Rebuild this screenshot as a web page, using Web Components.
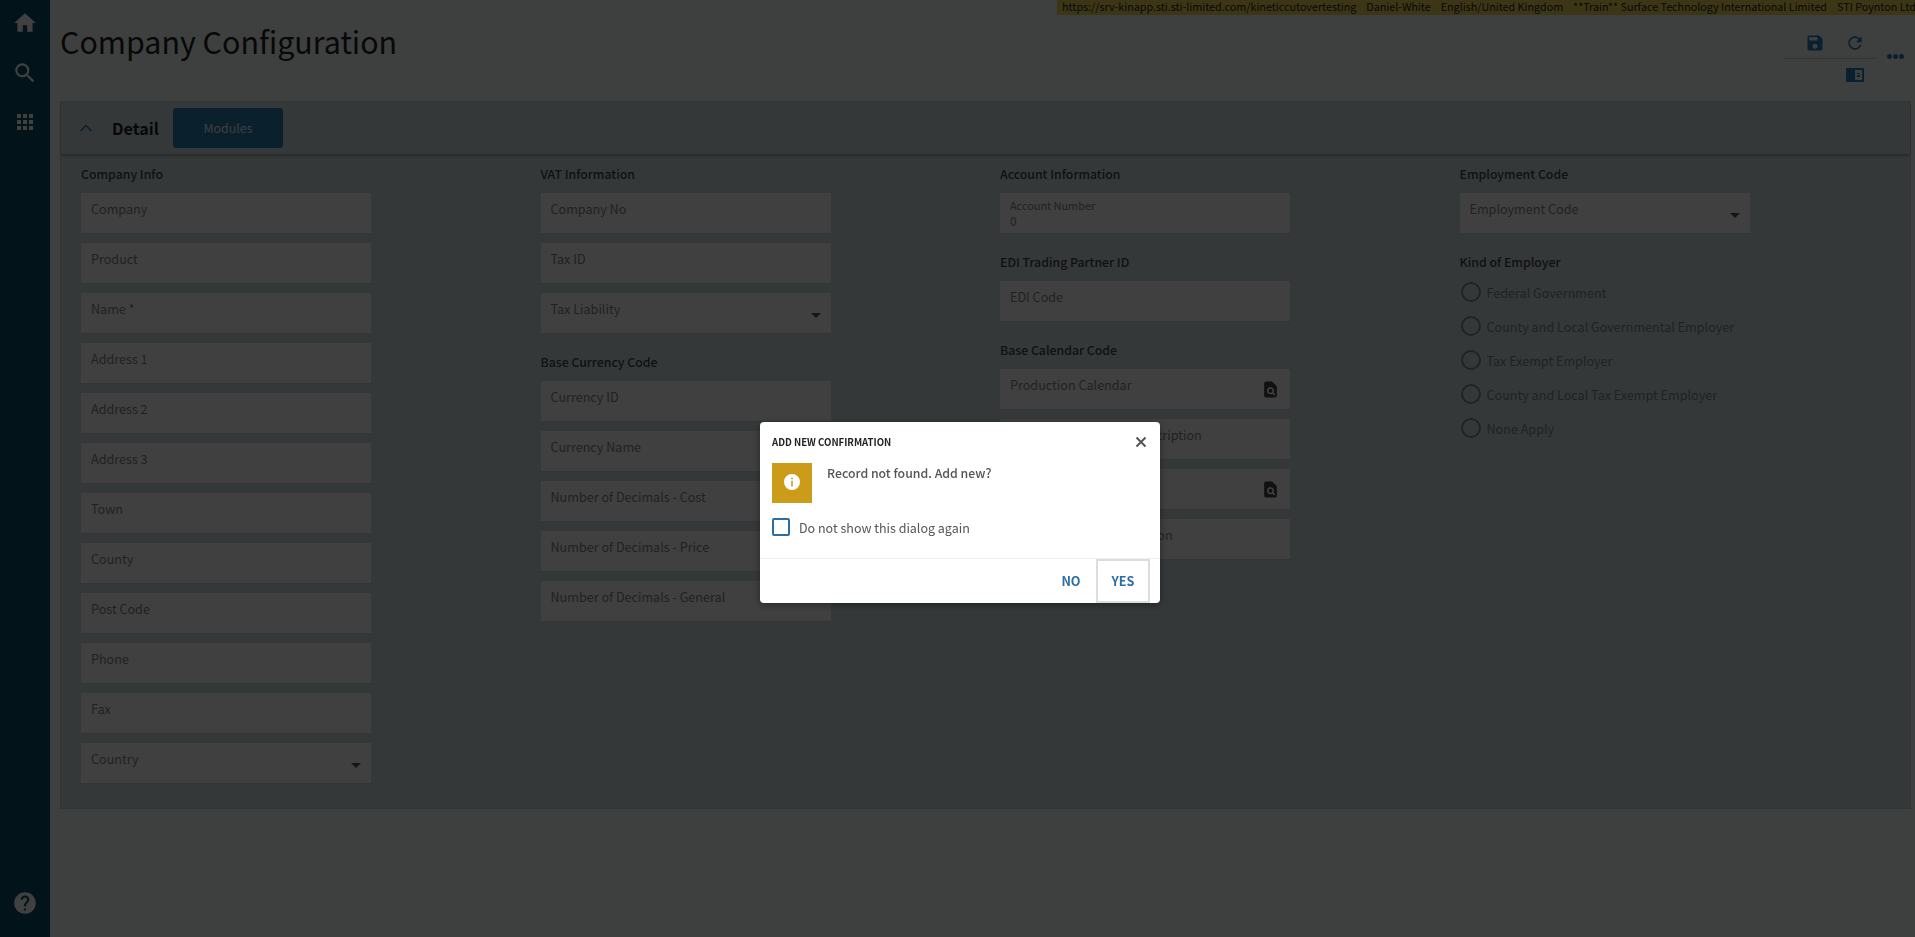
<!DOCTYPE html>
<html lang="en">
<head>
<meta charset="utf-8">
<title>Company Configuration</title>
<style>
  html, body { margin: 0; height: 100%; }
  body {
    font-family: "Noto Sans CJK SC", "Source Sans Pro", "Open Sans", sans-serif;
    background: #f8fcfc;
    overflow: hidden;
  }
</style>
</head>
<body>
<company-page></company-page>

<script>
const ICONS = {
  home: "M10 20v-6h4v6h5v-8h3L12 3 2 12h3v8z",
  search: "M15.5 14h-.79l-.28-.27A6.47 6.47 0 0 0 16 9.5 6.5 6.5 0 1 0 9.5 16c1.61 0 3.09-.59 4.23-1.57l.27.28v.79l5 4.99L20.49 19l-4.99-5zm-6 0C7.01 14 5 11.99 5 9.5S7.01 5 9.5 5 14 7.01 14 9.5 11.99 14 9.5 14z",
  help: "M12 2C6.48 2 2 6.48 2 12s4.48 10 10 10 10-4.48 10-10S17.52 2 12 2zm1 17h-2v-2h2v2zm2.07-7.75l-.9.92C13.45 12.9 13 13.5 13 15h-2v-.5c0-1.1.45-2.1 1.17-2.83l1.24-1.26c.37-.36.59-.86.59-1.41 0-1.1-.9-2-2-2s-2 .9-2 2H8c0-2.21 1.79-4 4-4s4 1.79 4 4c0 .88-.36 1.68-.93 2.25z",
  save: "M17 3H5c-1.11 0-2 .9-2 2v14c0 1.1.89 2 2 2h14c1.1 0 2-.9 2-2V7l-4-4zm-5 16c-1.66 0-3-1.34-3-3s1.34-3 3-3 3 1.34 3 3-1.34 3-3 3zm3-10H5V5h10v4z",
  refresh: "M17.65 6.35A7.958 7.958 0 0 0 12 4c-4.42 0-7.99 3.58-7.99 8s3.57 8 7.99 8c3.73 0 6.84-2.55 7.73-6h-2.08A5.99 5.99 0 0 1 12 18c-3.31 0-6-2.69-6-6s2.69-6 6-6c1.66 0 3.14.69 4.22 1.78L13 11h7V4l-2.35 2.35z",
  grid: "M4 4h4v4H4zM10 4h4v4h-4zM16 4h4v4h-4zM4 10h4v4H4zM10 10h4v4h-4zM16 10h4v4h-4zM4 16h4v4H4zM10 16h4v4h-4zM16 16h4v4h-4z",
  lookup: "M6 2h8l6 6v12a2 2 0 0 1-2 2H6a2 2 0 0 1-2-2V4a2 2 0 0 1 2-2zm6 7a4.5 4.5 0 1 0 2.4 8.3l2.3 2.3 1.4-1.4-2.3-2.3A4.5 4.5 0 0 0 12 9zm0 2a2.5 2.5 0 1 1 0 5 2.5 2.5 0 0 1 0-5z",
};

function icon(name, size) {
  return `<svg width="${size}" height="${size}" viewBox="0 0 24 24" fill="currentColor" aria-hidden="true"><path fill-rule="evenodd" d="${ICONS[name]}"/></svg>`;
}

class SideBar extends HTMLElement {
  constructor() {
    super();
    this.attachShadow({ mode: "open" });
    this.shadowRoot.innerHTML = `
      <style>
        :host {
          display: flex;
          flex-direction: column;
          align-items: center;
          width: 50px;
          flex: none;
          background: #0c4c68;
          color: #fff;
          padding: 7px 0 16px;
          box-sizing: border-box;
        }
        .item { height: 50px; display: flex; align-items: flex-start; padding-top: 3px; box-sizing: border-box; }
        .help { margin-top: auto; }
      </style>
      <div class="item">${icon("home", 26)}</div>
      <div class="item">${icon("search", 26)}</div>
      <div class="item">${icon("grid", 24)}</div>
      <div class="help">${icon("help", 26)}</div>
    `;
  }
}

class InfoBar extends HTMLElement {
  constructor() {
    super();
    this.attachShadow({ mode: "open" });
    this.shadowRoot.innerHTML = `
      <style>
        :host {
          display: flex;
          justify-content: flex-end;
        }
        .bar {
          width: 858px;
          height: 15px;
          box-sizing: border-box;
          padding-left: 5px;
          display: flex;
          gap: 10px;
          background: #f0d858;
          color: #222;
          font-size: 10.75px;
          line-height: 13px;
          white-space: nowrap;
          overflow: hidden;
        }
      </style>
      <div class="bar"><slot></slot></div>
    `;
  }
}

class PageHeader extends HTMLElement {
  constructor() {
    super();
    this.attachShadow({ mode: "open" });
    this.shadowRoot.innerHTML = `
      <style>
        :host {
          display: flex;
          justify-content: space-between;
          height: 86px;
          padding-left: 10px;
        }
        h1 {
          margin: 4px 0 0;
          font-size: 30.4px;
          font-weight: 400;
          line-height: 44px;
          color: #222;
        }
        .tools { display: flex; align-items: flex-start; padding-top: 13px; color: #2f7fb8; }
        .actions { width: 92px; }
        .row { display: flex; justify-content: flex-end; height: 30px; align-items: center; }
        .row.first { border-bottom: 1px solid #ccc; }
        .row.second { height: 32px; }
        .btn { width: 40px; display: flex; justify-content: center; }
        .more { width: 40px; height: 30px; margin-top: 13px; display: flex; justify-content: center; gap: 1px; align-items: center; }
        .more i { width: 5px; height: 5px; border-radius: 50%; background: currentColor; }
      </style>
      <h1><slot></slot></h1>
      <div class="tools">
        <div class="actions">
          <div class="row first">
            <div class="btn">${icon("save", 20)}</div>
            <div class="btn">${icon("refresh", 20)}</div>
          </div>
          <div class="row second">
            <div class="btn">
              <svg width="18" height="14" viewBox="0 0 18 14" fill="currentColor" aria-hidden="true"><path fill-rule="evenodd" d="M1 0h16a1 1 0 0 1 1 1v12a1 1 0 0 1-1 1H1a1 1 0 0 1-1-1V1a1 1 0 0 1 1-1zm8 2v10h7V2zm2 3h3v1h-3zm0 2h3v2h-3z"/></svg>
            </div>
          </div>
        </div>
        <div class="more"><i></i><i></i><i></i></div>
      </div>
    `;
  }
}

class DetailPanel extends HTMLElement {
  constructor() {
    super();
    this.attachShadow({ mode: "open" });
    this.shadowRoot.innerHTML = `
      <style>
        :host {
          display: block;
          margin: 0 4px 0 10px;
          background: #d0e0e4;
          border: 1px solid #c4d4dc;
          box-sizing: border-box;
          height: 708px;
        }
        header {
          height: 52px;
          display: flex;
          align-items: center;
          box-shadow: 0 2px 3px rgba(0,0,0,.25);
        }
        .chev { width: 50px; margin-right: 1px; display: flex; justify-content: center; color: #2f7fb8; box-sizing: border-box; }
        .title { font-size: 16.2px; font-weight: 700; color: #222; width: 61px; }
        .modules {
          width: 110px;
          height: 40px;
          line-height: 40px;
          text-align: center;
          font-size: 12.4px;
          background: #2c7fb4;
          color: #eef6ff;
          border-radius: 3px;
        }
        .body {
          padding: 10px 0 0 20px;
          display: grid;
          grid-template-columns: repeat(4, 459.5px);
        }
      </style>
      <header>
        <div class="chev">
          <svg width="14" height="8" viewBox="0 0 14 8" fill="none" stroke="currentColor" stroke-width="1.5" aria-hidden="true"><path d="M1.5 7 7 1.5 12.5 7"/></svg>
        </div>
        <div class="title">Detail</div>
        <div class="modules">Modules</div>
      </header>
      <div class="body"><slot></slot></div>
    `;
  }
}

class FormSection extends HTMLElement {
  constructor() {
    super();
    this.attachShadow({ mode: "open" });
    this.shadowRoot.innerHTML = `
      <style>
        :host { display: block; margin-bottom: 19px; }
        h3 {
          margin: 0 0 9px;
          height: 20px;
          font-size: 12.3px;
          line-height: 21px;
          font-weight: 500;
          color: #444;
        }
        .list { display: flex; flex-direction: column; gap: var(--list-gap, 10px); margin-top: var(--list-top, 0); }
      </style>
      <h3>${this.getAttribute("title")}</h3>
      <div class="list"><slot></slot></div>
    `;
    this.removeAttribute("title");
  }
}

class FormField extends HTMLElement {
  constructor() {
    super();
    this.attachShadow({ mode: "open" });
    const kind = this.getAttribute("kind");
    const value = this.getAttribute("value");
    let tail = "";
    if (kind === "select") tail = `<span class="caret"></span>`;
    if (kind === "lookup") tail = `<span class="lookup">${icon("lookup", 19)}</span>`;
    this.shadowRoot.innerHTML = `
      <style>
        :host {
          display: block;
          position: relative;
          width: 290px;
          height: 40px;
          background: #fff;
          box-shadow: 0 1px 0 #c8d4da;
          color: #858585;
        }
        .label { position: absolute; left: 10px; top: 6px; font-size: 12.6px; line-height: 20px; white-space: nowrap; }
        :host([value]) .label { font-size: 10.9px; top: 4px; line-height: 16px; }
        .value { position: absolute; left: 10px; top: 20px; font-size: 12px; line-height: 16px; }
        .caret {
          position: absolute; right: 10px; top: 20px;
          border-left: 5px solid transparent;
          border-right: 5px solid transparent;
          border-top: 5px solid #555;
        }
        .lookup { position: absolute; right: 10px; top: 11px; color: #444; display: flex; }
      </style>
      <span class="label"><slot></slot></span>
      ${value !== null ? `<span class="value">${value}</span>` : ""}
      ${tail}
    `;
  }
}

class RadioOption extends HTMLElement {
  constructor() {
    super();
    this.attachShadow({ mode: "open" });
    this.shadowRoot.innerHTML = `
      <style>
        :host { display: flex; align-items: center; height: 34px; gap: 6px; color: #858585; font-size: 12.6px; }
        i { width: 16px; height: 16px; margin-left: 1px; border: 2px solid #888; border-radius: 50%; flex: none; }
      </style>
      <i></i><span><slot></slot></span>
    `;
  }
}

class ConfirmDialog extends HTMLElement {
  constructor() {
    super();
    this.attachShadow({ mode: "open" });
    this.shadowRoot.innerHTML = `
      <style>
        :host { position: fixed; inset: 0; background: rgba(0,0,0,.75); display: block; }
        .box {
          position: absolute;
          left: 760px;
          top: 422px;
          width: 400px;
          height: 181px;
          background: #fff;
          border-radius: 4px;
          box-shadow: 0 2px 8px rgba(0,0,0,.4);
          display: flex;
          flex-direction: column;
          box-sizing: border-box;
        }
        .head { display: flex; justify-content: space-between; align-items: center; height: 41px; box-sizing: border-box; padding: 0 13px 1px 12px; }
        .head b { font-size: 9.6px; font-weight: 700; color: #222; }
        .head svg { display: block; color: #555; }
        .msg { display: flex; gap: 15px; padding: 0 12px; height: 40px; }
        .badge { width: 40px; height: 40px; box-sizing: border-box; padding-bottom: 3px; background: #cc9b1a; display: flex; align-items: center; justify-content: center; }
        .msg p { margin: 0; font-size: 12.3px; line-height: 20px; color: #555; font-weight: 500; }
        .check { display: flex; align-items: center; gap: 9px; margin: 15px 12px 0; height: 18px; font-size: 12.5px; color: #555; }
        .check i { width: 14px; height: 14px; border: 2px solid #2a6ea5; border-radius: 2px; flex: none; }
        .foot {
          margin-top: auto;
          height: 45px;
          border-top: 1px solid #eee;
          display: flex;
          justify-content: flex-end;
          align-items: stretch;
          padding-right: 10px;
          box-sizing: border-box;
          color: #2a6ea5;
          font-size: 12.6px;
          font-weight: 700;
        }
        .foot span { display: flex; align-items: center; justify-content: center; padding-bottom: 1px; box-sizing: border-box; }
        .no { width: 50px; }
        .yes { width: 54px; border: 2px solid #ddd; }
      </style>
      <div class="box" role="dialog">
        <div class="head">
          <b>ADD NEW CONFIRMATION</b>
          <svg width="12" height="12" viewBox="0 0 12 12" stroke="currentColor" stroke-width="2" aria-hidden="true"><path d="M1.5 1.5l9 9M10.5 1.5l-9 9"/></svg>
        </div>
        <div class="msg">
          <div class="badge">
            <svg width="16" height="16" viewBox="0 0 16 16" aria-hidden="true"><path fill="#fff" fill-rule="evenodd" d="M8 0a8 8 0 1 1 0 16A8 8 0 0 1 8 0zM7.2 3.6v1.6h1.6V3.6zm0 3.2v5.6h1.6V6.8z"/></svg>
          </div>
          <p>Record not found. Add new?</p>
        </div>
        <div class="check"><i></i><span>Do not show this dialog again</span></div>
        <div class="foot"><span class="no">NO</span><span class="yes">YES</span></div>
      </div>
    `;
  }
}

class CompanyPage extends HTMLElement {
  constructor() {
    super();
    this.attachShadow({ mode: "open" });
    const fields = (list) => list.map((f) => {
      const [label, kind] = f.split("|");
      return `<form-field${kind ? ` kind="${kind}"` : ""}>${label}</form-field>`;
    }).join("");
    this.shadowRoot.innerHTML = `
      <style>
        :host { display: flex; height: 937px; }
        main { flex: 1; min-width: 0; }
        .radios { --list-gap: 0px; --list-top: -6px; }
      </style>
      <side-bar></side-bar>
      <main>
        <info-bar>
          <span>https://srv-kinapp.sti.sti-limited.com/kineticcutovertesting</span>
          <span>Daniel-White</span>
          <span>English/United Kingdom</span>
          <span>**Train** Surface Technology International Limited</span>
          <span>STI Poynton Ltd</span>
        </info-bar>
        <page-header>Company Configuration</page-header>
        <detail-panel>
          <div>
            <form-section title="Company Info">
              ${fields(["Company", "Product", "Name *", "Address 1", "Address 2", "Address 3", "Town", "County", "Post Code", "Phone", "Fax", "Country|select"])}
            </form-section>
          </div>
          <div>
            <form-section title="VAT Information">
              ${fields(["Company No", "Tax ID", "Tax Liability|select"])}
            </form-section>
            <form-section title="Base Currency Code">
              ${fields(["Currency ID", "Currency Name", "Number of Decimals - Cost", "Number of Decimals - Price", "Number of Decimals - General"])}
            </form-section>
          </div>
          <div>
            <form-section title="Account Information">
              <form-field value="0">Account Number</form-field>
            </form-section>
            <form-section title="EDI Trading Partner ID">
              ${fields(["EDI Code"])}
            </form-section>
            <form-section title="Base Calendar Code">
              ${fields(["Production Calendar|lookup", "Production Calendar Description", "Works Calendar|lookup", "Works Calendar Description"])}
            </form-section>
          </div>
          <div>
            <form-section title="Employment Code">
              ${fields(["Employment Code|select"])}
            </form-section>
            <form-section class="radios" title="Kind of Employer">
              <radio-option>Federal Government</radio-option>
              <radio-option>County and Local Governmental Employer</radio-option>
              <radio-option>Tax Exempt Employer</radio-option>
              <radio-option>County and Local Tax Exempt Employer</radio-option>
              <radio-option>None Apply</radio-option>
            </form-section>
          </div>
        </detail-panel>
      </main>
      <confirm-dialog></confirm-dialog>
    `;
  }
}

customElements.define("side-bar", SideBar);
customElements.define("info-bar", InfoBar);
customElements.define("page-header", PageHeader);
customElements.define("detail-panel", DetailPanel);
customElements.define("form-section", FormSection);
customElements.define("form-field", FormField);
customElements.define("radio-option", RadioOption);
customElements.define("confirm-dialog", ConfirmDialog);
customElements.define("company-page", CompanyPage);
</script>
</body>
</html>
